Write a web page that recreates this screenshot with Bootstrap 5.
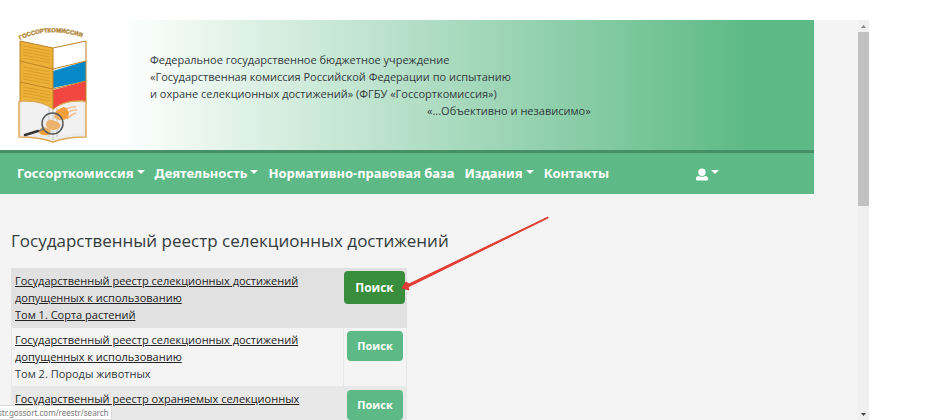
<!DOCTYPE html>
<html lang="ru">
<head>
<meta charset="utf-8">
<meta name="viewport" content="width=device-width, initial-scale=1">
<title>Госсорткомиссия</title>
<link href="https://cdn.jsdelivr.net/npm/bootstrap@5.3.0/dist/css/bootstrap.min.css" rel="stylesheet">
<style>
body { font-family: "Open Sans", "Noto Sans", sans-serif; font-size: 11px; line-height: 17px; color: #333b3d; background: #fff; }
.screen { height: 100vh; padding: 20px 78px 0 0; }
.viewport-area { background: #f4f4f4; padding-right: 44px; }
.masthead { min-height: 133px; border-bottom: 3px solid #459066; background: linear-gradient(90deg, #fff 120px, #5dba86 92%); }
.brand-logo { width: 106px; }
.org-info { padding: 31px 0 0 44px; }
.motto { padding-left: 277px; }
.site-nav { min-height: 41px; padding: 0 12px 0 17px; background: #5dba86; font-family: "Noto Sans", "Open Sans", sans-serif; font-size: 13px; font-weight: 700; }
.main-links { gap: 10px; }
.site-nav .nav-link { color: #fff; padding: 0; white-space: nowrap; }
.site-nav .dropdown-toggle::after { margin-left: 3px; vertical-align: 4px; border-width: 4px 4px 0; }
.user-menu { padding-right: 83px; }
.content-area { padding: 35px 0 0 11px; }
.page-title { font-size: 17px; line-height: 24px; font-weight: 400; margin-bottom: 15px; }
.registry { width: 396px; margin: 0; color: #333b3d; border-color: #e6e6e6; font-size: 11px; }
.registry td { padding: 3px 3px 4px; border: 1px solid #e8e8e8; box-shadow: none; background: #f4f4f4; vertical-align: top; }
.registry tr:nth-child(odd) td { background: #e8e8e8; }
.registry tr.current td { background: #e1e1e1; border-color: #e1e1e1; }
.registry a { color: #222; text-decoration: underline; }
.registry td:last-child { width: 63px; padding: 3px 3px 0; }
.btn-search { width: 56px; height: 30px; padding: 0; border: 0; border-radius: 4px; background: #5dba86; color: #fff; font-size: 11px; font-weight: 700; }
.btn-search:hover { background: #388e3c; color: #fff; }
.current .btn-search { width: 61px; height: 33px; margin: -1px -3px 0; font-size: 12px; background: #388e3c; }
.pointer-arrow { left: 400px; top: 195px; }
.status-line { left: 0; bottom: 0; height: 15px; padding-right: 2px; background: #fff; border: 1px solid #d8d8d8; border-left: 0; border-top-right-radius: 3px; color: #777; font-family: "Noto Sans", sans-serif; font-size: 8px; line-height: 14px; white-space: nowrap; }
.status-line span { margin-left: -2px; }
.scroll-track { width: 11px; background: #f0f0f0; }
.scroll-track button { height: 12px; padding: 0; border: 0; background: none; line-height: 0; }
.scroll-thumb { height: 174px; background: #c1c1c1; }
</style>
</head>
<body>
<div class="screen d-flex overflow-hidden">
  <div class="viewport-area position-relative flex-grow-1 overflow-hidden">
    <header>
      <div class="masthead d-flex">
        <svg class="brand-logo flex-shrink-0" height="130" viewBox="0 20 106 130" role="img" aria-label="Госсорткомиссия">
          <path d="M0 20H106V150H0Z" fill="#fff"/>
          <defs><path id="arc" d="M20 40Q53 24 91 41"/></defs>
          <text font-family="Liberation Sans, sans-serif" font-size="6" font-weight="700" fill="#b48a3c" stroke="#b48a3c" stroke-width=".4"><textPath href="#arc">ГОССОРТКОМИССИЯ</textPath></text>
          <path d="M20 41Q52 34 86 41L53 48Z" fill="#fff"/>
          <path d="M20 41L53 48V110L20 102Z" fill="#eeb137"/>
          <path d="M53 48L86 41V61L53 69Z" fill="#fff"/>
          <path d="M53 71L86 61V81L53 88Z" fill="#0789c7"/>
          <path d="M53 90L86 81V103L53 110Z" fill="#f24640"/>
          <path d="M23 46L50 51M23 49L50 54M23 52L50 57M23 55L50 60M23 58L50 63M23 67L50 72M23 70L50 75M23 73L50 78M23 76L50 81M23 79L50 84M23 87L50 92M23 90L50 95M23 93L50 98M23 96L50 101" stroke="#d59827" stroke-width=".8" fill="none"/>
          <path d="M20 41L53 48L86 41V61L53 69L20 61ZM20 61V82L53 89L86 81V61M20 82V103M86 81V103M53 48V110" fill="none" stroke="#bd8228"/>
          <path d="M19 102L22 101Q43 100 53 110Q63 100 83 101L86 102V137Q66 137 53 142Q39 137 19 137Z" fill="#ececec" stroke="#dda958" stroke-width="1.5"/>
          <path d="M22 102Q43 101 53 110V138Q40 133 22 133ZM53 110Q63 101 83 102V133Q66 133 53 138Z" fill="#f1f1f1"/>
          <path d="M53 110V140M49 107V137M57 108V137" stroke="#c5c5c5"/>
          <path d="M61 114Q67 106 76 107M64 117Q70 109 77 110M67 119Q72 114 76 113" stroke="#f3bd8c" stroke-width="1.3" fill="none"/>
          <path d="M54 117Q55 109 64 107Q71 110 68 118Q59 123 54 117ZM46 126Q46 117 55 121Q64 124 58 129Q51 132 46 126ZM39 133Q40 125 48 128Q54 132 48 135Q42 136 39 133Z" fill="#f3a03b"/>
          <circle cx="52.5" cy="123.5" r="10.5" fill="#ddd" fill-opacity=".3" stroke="#55585b" stroke-width="1.5"/>
          <path d="M43 129L39 131" stroke="#777" stroke-width="1.5"/>
          <path d="M38 131L25 135" stroke="#353535" stroke-width="2.5" stroke-linecap="round"/>
        </svg>
        <div class="org-info">
          <div>Федеральное государственное бюджетное учреждение</div>
          <div>«Государственная комиссия Российской Федерации по испытанию</div>
          <div>и охране селекционных достижений» (ФГБУ «Госсорткомиссия»)</div>
          <div class="motto">«...Объективно и независимо»</div>
        </div>
      </div>
      <nav class="site-nav d-flex align-items-center justify-content-between" aria-label="Главное меню">
        <div class="d-flex main-links">
          <a class="nav-link dropdown-toggle" href="#">Госсорткомиссия</a>
          <a class="nav-link dropdown-toggle" href="#">Деятельность</a>
          <a class="nav-link" href="#">Нормативно-правовая база</a>
          <a class="nav-link dropdown-toggle" href="#">Издания</a>
          <a class="nav-link" href="#">Контакты</a>
        </div>
        <div class="user-menu">
          <a class="nav-link dropdown-toggle" href="#" aria-label="Пользователь"><svg width="12" height="13" viewBox="0 0 13 13" fill="#fff"><circle cx="6.5" cy="4" r="4"/><path d="M3 8Q6.5 10 10 8Q13 8 13 11V12Q13 13 12 13H1Q0 13 0 12V11Q0 8 3 8Z"/></svg></a>
        </div>
      </nav>
    </header>
    <main class="content-area">
      <h1 class="page-title">Государственный реестр селекционных достижений</h1>
      <table class="table registry">
        <tbody>
          <tr class="current"><td><a href="#">Государственный реестр селекционных достижений<br>допущенных к использованию<br>Том 1. Сорта растений</a></td><td><button type="button" class="btn btn-search">Поиск</button></td></tr>
          <tr><td><a href="#">Государственный реестр селекционных достижений<br>допущенных к использованию</a><br>Том 2. Породы животных</td><td><button type="button" class="btn btn-search">Поиск</button></td></tr>
          <tr><td><a href="#">Государственный реестр охраняемых селекционных</a></td><td><button type="button" class="btn btn-search">Поиск</button></td></tr>
        </tbody>
      </table>
    </main>
    <svg class="pointer-arrow position-absolute" width="150" height="80" viewBox="0 0 150 80" aria-hidden="true"><path d="M148 2L9 69L6 67L2 73L9 75L8 72L148 3Z" fill="#e03c31" stroke="#e03c31" stroke-linejoin="round"/></svg>
    <div class="status-line position-absolute overflow-hidden"><span>str.gossort.com/reestr/search</span></div>
  </div>
  <div class="scroll-track d-flex flex-column flex-shrink-0">
    <button type="button" aria-label="Вверх"><svg width="5" height="3" viewBox="0 0 5 3"><path d="M0 3L2.5 0L5 3Z" fill="#888"/></svg></button>
    <div class="scroll-thumb"></div>
    <button type="button" class="mt-auto" aria-label="Вниз"><svg width="5" height="3" viewBox="0 0 5 3"><path d="M0 0H5L2.5 3Z" fill="#444"/></svg></button>
  </div>
</div>
<script src="https://cdn.jsdelivr.net/npm/bootstrap@5.3.0/dist/js/bootstrap.bundle.min.js"></script>
</body>
</html>
